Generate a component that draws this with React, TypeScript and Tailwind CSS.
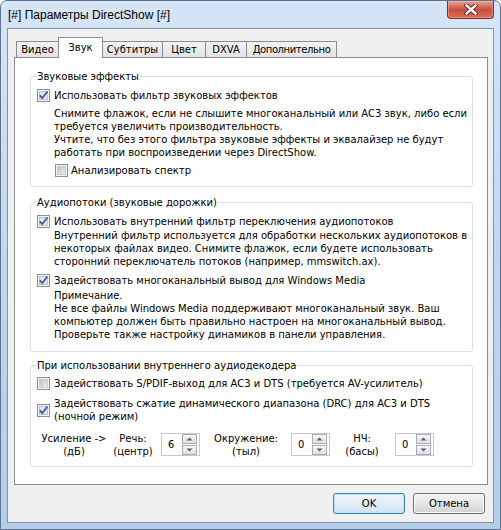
import type { ReactNode } from 'react'

function Check({ checked }: { checked?: boolean }) {
  return (
    <svg width="13" height="13" viewBox="0 0 13 13" className="shrink-0">
      <defs>
        <linearGradient id="cbFill" x1="0" y1="0" x2="1" y2="1">
          <stop offset="0" stopColor="#b9bdc3" />
          <stop offset="1" stopColor="#f4f4f5" />
        </linearGradient>
      </defs>
      <rect x="0.5" y="0.5" width="12" height="12" fill="#f6f6f6" stroke="#8e8f8f" />
      <rect x="2.5" y="2.5" width="8" height="8" fill={checked ? '#dfe6f2' : 'url(#cbFill)'} stroke={checked ? '#b7c3d8' : '#c9ccd1'} />
      {checked && (
        <path d="M2.8 6.2 L5.2 9.2 L10.4 2.4" fill="none" stroke="#3d5394" strokeWidth="1.7" />
      )}
    </svg>
  )
}

function CheckRow({ checked, children }: { checked?: boolean; children: ReactNode }) {
  return (
    <div className="flex items-center gap-[4px]">
      <Check checked={checked} />
      <div className="whitespace-nowrap leading-[13px]">{children}</div>
    </div>
  )
}

function Group({ label, className, children }: { label: string; className?: string; children: ReactNode }) {
  return (
    <div className={`relative ml-[15px] w-[443px] rounded-[3px] border border-[#d5dfe5] pl-[6px] ${className ?? ''}`}>
      <div className="absolute left-[5px] top-[-7px] whitespace-nowrap bg-white px-[1px] leading-[13px]">{label}</div>
      {children}
    </div>
  )
}

function Arrow({ up }: { up?: boolean }) {
  return (
    <svg width="7" height="4" viewBox="0 0 7 4">
      <path d={up ? 'M0.5 3.5 L3.5 0.5 L6.5 3.5 Z' : 'M0.5 0.5 L3.5 3.5 L6.5 0.5 Z'} fill="#4d6185" />
    </svg>
  )
}

function Spin({ value }: { value: string }) {
  return (
    <div className="mt-px flex h-[23px] w-[39px] items-center justify-between border border-[#c5c8cc] bg-white pl-[6px] pr-[2px]">
      <span className="leading-[13px]">{value}</span>
      <div className="flex flex-col gap-px">
        <div className="flex h-[10px] w-[15px] items-center justify-center border border-[#a9abaf] bg-gradient-to-b from-[#f7f7f7] to-[#dedfe1]">
          <Arrow up />
        </div>
        <div className="flex h-[10px] w-[15px] items-center justify-center border border-[#a9abaf] bg-gradient-to-b from-[#f7f7f7] to-[#dedfe1]">
          <Arrow />
        </div>
      </div>
    </div>
  )
}

function Caption({ top, bottom, w, ml }: { top: string; bottom: string; w: string; ml: string }) {
  return (
    <div className={`${w} ${ml} flex flex-col items-center whitespace-nowrap leading-[13px]`}>
      <span>{top}</span>
      <span>{bottom}</span>
    </div>
  )
}

const tabs = [
  { name: 'Видео', w: 'w-[43px]' },
  { name: 'Звук', w: 'w-[45px]', active: true },
  { name: 'Субтитры', w: 'w-[61px]' },
  { name: 'Цвет', w: 'w-[44px]' },
  { name: 'DXVA', w: 'w-[42px]' },
  { name: 'Дополнительно', w: 'w-[91px] tracking-[-0.4px]' },
]

export default function App() {
  return (
    <div className="relative h-[530px] w-[501px] overflow-hidden rounded-t-[7px] border border-[#5b7291] bg-gradient-to-b from-[#d6e6f7] via-[#c1d6ee] to-[#b6cde9] font-['DejaVu_Sans',sans-serif] text-[10px] text-black">
      {/* title bar */}
      <div className="flex h-[27px] items-start justify-between">
        <div className="mt-[7px] pl-[7px] font-['Liberation_Sans',sans-serif] text-[12px] leading-[15px]">
          [#] Параметры DirectShow [#]
        </div>
        <div className="mr-[6px] flex h-[18px] w-[47px] items-center justify-center rounded-b-[4px] border border-t-0 border-[#7a2f26] bg-gradient-to-b from-[#e6a495] via-[#c84f3d] to-[#dc6b57] shadow-[inset_0_0_0_1px_rgba(255,200,190,0.45)]">
          <svg width="14" height="11" viewBox="0 0 14 11">
            <path d="M2.5 1.5 L11.5 9.5 M11.5 1.5 L2.5 9.5" stroke="#5a1f19" strokeWidth="4.2" strokeLinecap="square" />
            <path d="M2.5 1.5 L11.5 9.5 M11.5 1.5 L2.5 9.5" stroke="#ffffff" strokeWidth="2.4" strokeLinecap="square" />
          </svg>
        </div>
      </div>

      {/* client area */}
      <div className="ml-[6px] h-[495px] w-[487px] border border-[#7f93ab] bg-[#f0f0f0]">
        {/* tabs */}
        <div className="ml-[8px] mt-[8px] flex h-[20px] items-end">
          {tabs.map((t, i) =>
            t.active ? (
              <div
                key={t.name}
                className={`${t.w} relative z-10 -mb-px ${i ? '-ml-px' : ''} flex h-[21px] items-center justify-center border border-b-0 border-[#898c95] bg-white pb-[2px]`}
              >
                {t.name}
              </div>
            ) : (
              <div
                key={t.name}
                className={`${t.w} ${i ? '-ml-px' : ''} flex h-[16px] items-center justify-center whitespace-nowrap border border-b-0 border-[#898c95] bg-gradient-to-b from-[#f3f3f3] to-[#e3e3e3] leading-[13px]`}
              >
                {t.name}
              </div>
            ),
          )}
        </div>

        {/* panel */}
        <div className="ml-[6px] h-[428px] w-[474px] border border-[#898c95] bg-white">
          <Group label="Звуковые эффекты" className="mt-[18px] pb-[9px] pt-[12px]">
            <CheckRow checked>Использовать фильтр звуковых эффектов</CheckRow>
            <div className="mt-[5px] whitespace-nowrap pl-[17px] leading-[13px]">
              Снимите флажок, если не слышите многоканальный или AC3 звук, либо если
              <br />
              требуется увеличить производительность.
              <br />
              Учтите, что без этого фильтра звуковые эффекты и эквалайзер не будут
              <br />
              работать при воспроизведении через DirectShow.
            </div>
            <div className="mt-[5px] flex items-center gap-[3px] pl-[18px]">
              <Check />
              <span className="whitespace-nowrap leading-[13px]">Анализировать спектр</span>
            </div>
          </Group>

          <Group label="Аудиопотоки (звуковые дорожки)" className="mt-[15px] pb-[10px] pt-[12px]">
            <CheckRow checked>Использовать внутренний фильтр переключения аудиопотоков</CheckRow>
            <div className="mt-px whitespace-nowrap pl-[17px] leading-[13px]">
              Внутренний фильтр используется для обработки нескольких аудиопотоков в
              <br />
              некоторых файлах видео. Снимите флажок, если будете использовать
              <br />
              сторонний переключатель потоков (например, mmswitch.ax).
            </div>
            <div className="mt-[6px]">
              <CheckRow checked>Задействовать многоканальный вывод для Windows Media</CheckRow>
            </div>
            <div className="mt-[2px] whitespace-nowrap pl-[17px] leading-[13px]">
              Примечание.
              <br />
              Не все файлы Windows Media поддерживают многоканальный звук. Ваш
              <br />
              компьютер должен быть правильно настроен на многоканальный вывод.
              <br />
              Проверьте также настройку динамиков в панели управления.
            </div>
          </Group>

          <Group label="При использовании внутреннего аудиодекодера" className="mt-[13px] pb-[8px] pt-[11px]">
            <CheckRow>Задействовать S/PDIF-выход для AC3 и DTS (требуется AV-усилитель)</CheckRow>
            <div className="mt-[7px]">
              <CheckRow checked>
                Задействовать сжатие динамического диапазона (DRC) для AC3 и DTS
                <br />
                (ночной режим)
              </CheckRow>
            </div>
            <div className="mt-[9px] flex items-start">
              <Caption top="Усиление ->" bottom="(дБ)" w="w-[68px]" ml="ml-[3px]" />
              <Caption top="Речь:" bottom="(центр)" w="w-[46px]" ml="ml-[2px]" />
              <div className="ml-[5px]">
                <Spin value="6" />
              </div>
              <Caption top="Окружение:" bottom="(тыл)" w="w-[76px]" ml="ml-[8px]" />
              <div className="ml-[7px]">
                <Spin value="0" />
              </div>
              <Caption top="НЧ:" bottom="(басы)" w="w-[50px]" ml="ml-[7px]" />
              <div className="ml-[8px]">
                <Spin value="0" />
              </div>
            </div>
          </Group>
        </div>

        {/* buttons */}
        <div className="mr-[8px] mt-[8px] flex justify-end gap-[8px]">
          <button className="flex h-[21px] w-[72px] items-center justify-center rounded-[3px] border border-[#3c7fb1] bg-gradient-to-b from-[#eef6fc] via-[#e2eef8] to-[#cfe2f1] shadow-[inset_0_0_0_1px_#bfe4f9]">
            OK
          </button>
          <button className="flex h-[21px] w-[72px] items-center justify-center rounded-[3px] border border-[#707070] bg-gradient-to-b from-[#f2f2f2] via-[#e6e6e6] to-[#d2d2d2] shadow-[inset_0_0_0_1px_#fbfbfb]">
            Отмена
          </button>
        </div>
      </div>
    </div>
  )
}
